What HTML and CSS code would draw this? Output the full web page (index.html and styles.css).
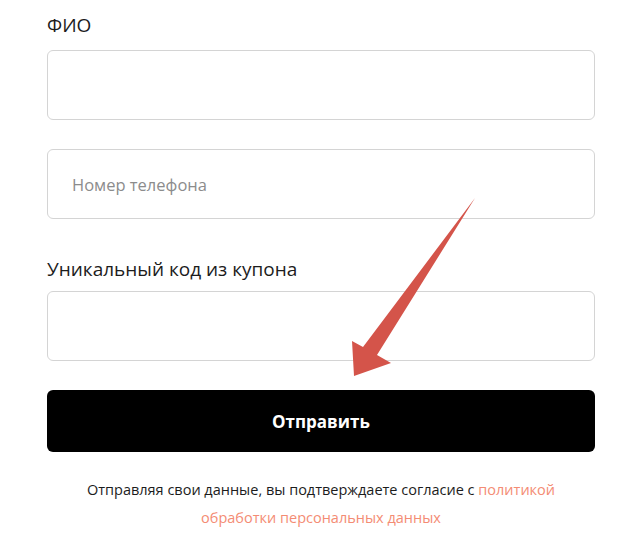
FILE: index.html
```html
<!DOCTYPE html>
<html lang="ru">
<head>
<meta charset="utf-8">
<title>Форма</title>
<link rel="stylesheet" href="styles.css">
</head>
<body>
<form class="form">
  <label class="label label-first" for="fio">ФИО</label>
  <input class="field" id="fio" type="text">
  <input class="field field-gap" type="text" placeholder="Номер телефона">
  <label class="label label-mid" for="code">Уникальный код из купона</label>
  <input class="field" id="code" type="text">
  <button class="submit" type="button">Отправить</button>
  <div class="note">
    <p class="note-line">Отправляя свои данные, вы подтверждаете согласие с <a class="link" href="#">политикой</a></p>
    <p class="note-line"><a class="link" href="#">обработки персональных данных</a></p>
  </div>
</form>
<svg class="arrow" width="644" height="540" viewBox="0 0 644 540">
  <polygon points="475,198 377,355 391,363 354,376 352,341 363,347" fill="#d4544a"/>
</svg>
</body>
</html>
```
FILE: styles.css
```css
html, body {
  margin: 0;
  padding: 0;
  background: #fff;
}
body {
  width: 644px;
  height: 540px;
  overflow: hidden;
  position: relative;
  font-family: "Open Sans", "Liberation Sans", sans-serif;
  color: #1a1a1a;
}
.form {
  display: flex;
  flex-direction: column;
  width: 548px;
  padding: 12px 0 0 47px;
}
.label {
  font-size: 19px;
  line-height: 26px;
  color: #1c1c1c;
}
.label-first {
  margin-bottom: 12px;
}
.label-mid {
  margin-top: 37px;
  margin-bottom: 9px;
}
.field {
  box-sizing: border-box;
  height: 70px;
  width: 548px;
  border: 1px solid #d4d4d4;
  border-radius: 6px;
  padding: 0 24px;
  font-family: inherit;
  font-size: 16.5px;
  background: #fff;
  outline: none;
}
.field::placeholder {
  color: #8c8c8c;
}
.field-gap {
  margin-top: 29px;
}
.submit {
  margin-top: 29px;
  height: 62px;
  width: 548px;
  border: none;
  border-radius: 6px;
  background: #000;
  color: #fff;
  font-family: inherit;
  font-size: 17px;
  font-weight: 700;
}
.note {
  margin-top: 24px;
  text-align: center;
  font-size: 14.5px;
  line-height: 28px;
  color: #1c1c1c;
}
.note-line {
  margin: 0;
}
.link {
  color: #f48c74;
  text-decoration: none;
}
.arrow {
  position: absolute;
  left: 0;
  top: 0;
  pointer-events: none;
}
```
